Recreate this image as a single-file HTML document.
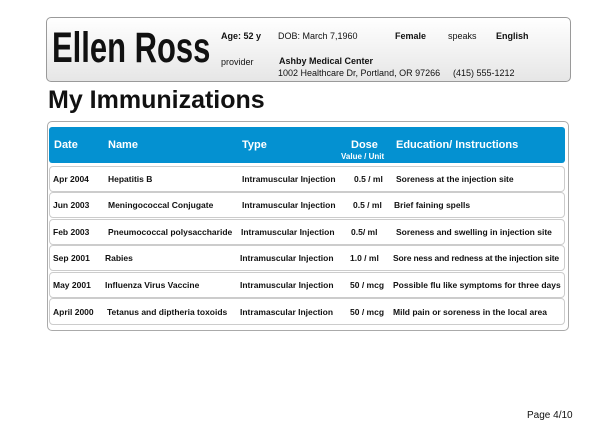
<!DOCTYPE html>
<html><head><meta charset="utf-8"><style>
body{margin:0;width:615px;height:424px;background:#fff;font-family:"Liberation Sans",Arial,sans-serif;position:relative;overflow:hidden;color:#111}
.a{position:absolute;white-space:nowrap}
.hdr{position:absolute;left:46px;top:17px;width:523px;height:63px;border:1px solid #9a9a9a;border-radius:5px;background:linear-gradient(#fff,#e6e6e6)}
.name{left:52px;top:24px;font-size:43px;font-weight:bold;transform:scaleX(.72);transform-origin:left top}
.s{font-size:9px}
.b{font-weight:bold}
.box{position:absolute;left:47px;top:121px;width:520px;height:208px;border:1px solid #aaa;border-radius:5px}
.blue{position:absolute;left:49px;top:127px;width:516px;height:36px;background:#0491d1;border-radius:3px}
.th{color:#fff;font-weight:bold;font-size:11px}
.row{position:absolute;left:49px;width:514px;height:24px;border:1px solid #ccc;border-radius:4px}
.r{font-size:8.5px;font-weight:bold}
</style></head><body>
<div class="hdr"></div>
<div class="a name">Ellen Ross</div>
<div class="a s b" style="left:221px;top:31px">Age: 52 y</div>
<div class="a s" style="left:278px;top:31px">DOB: March 7,1960</div>
<div class="a s b" style="left:395px;top:31px">Female</div>
<div class="a s" style="left:448px;top:31px">speaks</div>
<div class="a s b" style="left:496px;top:31px">English</div>
<div class="a s" style="left:221px;top:57px">provider</div>
<div class="a s b" style="left:279px;top:56px">Ashby Medical Center</div>
<div class="a s" style="left:278px;top:68px">1002 Healthcare Dr, Portland, OR 97266</div>
<div class="a s" style="left:453px;top:68px">(415) 555-1212</div>
<div class="a b" style="left:48px;top:86px;font-size:25px">My Immunizations</div>
<div class="box"></div>
<div class="blue"></div>
<div class="a th" style="left:54px;top:139px">Date</div>
<div class="a th" style="left:108px;top:139px">Name</div>
<div class="a th" style="left:242px;top:139px">Type</div>
<div class="a th" style="left:351px;top:139px">Dose</div>
<div class="a th" style="left:341px;top:152px;font-size:8px">Value / Unit</div>
<div class="a th" style="left:396px;top:139px">Education/ Instructions</div>

<div class="row" style="top:166px"></div>
<div class="row" style="top:192px"></div>
<div class="row" style="top:219px"></div>
<div class="row" style="top:245px"></div>
<div class="row" style="top:272px"></div>
<div class="row" style="top:298px;height:25px"></div>

<div class="a r" style="left:53px;top:174px">Apr 2004</div>
<div class="a r" style="left:108px;top:174px">Hepatitis B</div>
<div class="a r" style="left:242px;top:174px">Intramuscular Injection</div>
<div class="a r" style="left:354px;top:174px">0.5 / ml</div>
<div class="a r" style="left:396px;top:174px">Soreness at the injection site</div>

<div class="a r" style="left:53px;top:200px">Jun 2003</div>
<div class="a r" style="left:108px;top:200px">Meningococcal Conjugate</div>
<div class="a r" style="left:242px;top:200px">Intramuscular Injection</div>
<div class="a r" style="left:353px;top:200px">0.5 / ml</div>
<div class="a r" style="left:394px;top:200px">Brief faining spells</div>

<div class="a r" style="left:53px;top:227px">Feb 2003</div>
<div class="a r" style="left:108px;top:227px">Pneumococcal polysaccharide</div>
<div class="a r" style="left:241px;top:227px">Intramuscular Injection</div>
<div class="a r" style="left:351px;top:227px">0.5/ ml</div>
<div class="a r" style="left:396px;top:227px">Soreness and swelling in injection site</div>

<div class="a r" style="left:53px;top:253px">Sep 2001</div>
<div class="a r" style="left:105px;top:253px">Rabies</div>
<div class="a r" style="left:240px;top:253px">Intramuscular Injection</div>
<div class="a r" style="left:350px;top:253px">1.0 / ml</div>
<div class="a r" style="left:393px;top:253px;letter-spacing:-0.15px">Sore ness and redness at the injection site</div>

<div class="a r" style="left:53px;top:280px">May 2001</div>
<div class="a r" style="left:105px;top:280px">Influenza Virus Vaccine</div>
<div class="a r" style="left:240px;top:280px">Intramuscular Injection</div>
<div class="a r" style="left:350px;top:280px">50 / mcg</div>
<div class="a r" style="left:393px;top:280px">Possible flu like symptoms for three days</div>

<div class="a r" style="left:53px;top:307px">April 2000</div>
<div class="a r" style="left:107px;top:307px">Tetanus and diptheria toxoids</div>
<div class="a r" style="left:240px;top:307px">Intramascular Injection</div>
<div class="a r" style="left:350px;top:307px">50 / mcg</div>
<div class="a r" style="left:393px;top:307px">Mild pain or soreness in the local area</div>

<div class="a" style="left:527px;top:410px;font-size:10px">Page 4/10</div>
</body></html>
